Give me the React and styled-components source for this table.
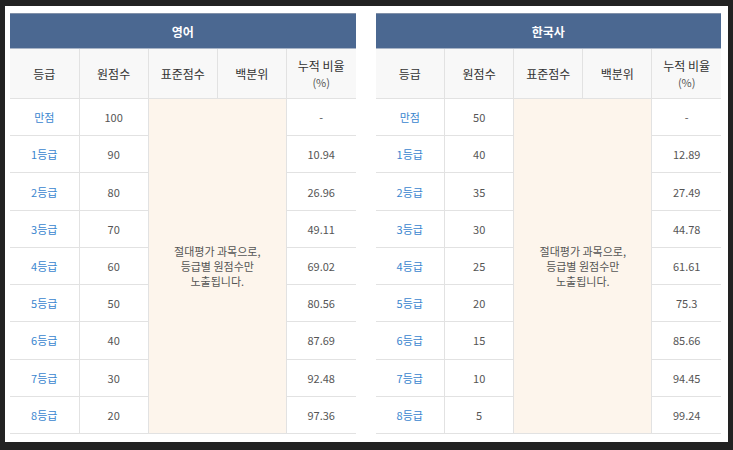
import styled, { createGlobalStyle } from 'styled-components';

const GlobalStyle = createGlobalStyle`
  html, body {
    margin: 0;
    padding: 0;
    background: #222222;
  }
  body {
    font-family: 'Noto Sans CJK KR', 'Noto Sans', sans-serif;
  }
`;

const english = {
  title: '영어',
  rows: [
    ['만점', '100', '-'],
    ['1등급', '90', '10.94'],
    ['2등급', '80', '26.96'],
    ['3등급', '70', '49.11'],
    ['4등급', '60', '69.02'],
    ['5등급', '50', '80.56'],
    ['6등급', '40', '87.69'],
    ['7등급', '30', '92.48'],
    ['8등급', '20', '97.36'],
  ],
};

const history = {
  title: '한국사',
  rows: [
    ['만점', '50', '-'],
    ['1등급', '40', '12.89'],
    ['2등급', '35', '27.49'],
    ['3등급', '30', '44.78'],
    ['4등급', '25', '61.61'],
    ['5등급', '20', '75.3'],
    ['6등급', '15', '85.66'],
    ['7등급', '10', '94.45'],
    ['8등급', '5', '99.24'],
  ],
};

const ScoreTable = ({ data }) => (
  <Table>
    <colgroup>
      <Col />
      <Col />
      <Col />
      <Col />
      <Col />
    </colgroup>
    <thead>
      <tr>
        <Title colSpan={5}>{data.title}</Title>
      </tr>
      <tr>
        <Head>등급</Head>
        <Head>원점수</Head>
        <Head>표준점수</Head>
        <Head>백분위</Head>
        <Head last>
          누적 비율
          <small>(%)</small>
        </Head>
      </tr>
    </thead>
    <tbody>
      {data.rows.map(([grade, raw, ratio], i) => (
        <tr key={grade}>
          <Grade>{grade}</Grade>
          <Cell>{raw}</Cell>
          {i === 0 && (
            <Merged colSpan={2} rowSpan={data.rows.length}>
              절대평가 과목으로,
              <br />
              등급별 원점수만
              <br />
              노출됩니다.
            </Merged>
          )}
          <Cell last>{ratio}</Cell>
        </tr>
      ))}
    </tbody>
  </Table>
);

const App = () => (
  <>
    <GlobalStyle />
    <Frame>
      <Sheet>
        <ScoreTable data={english} />
        <ScoreTable data={history} />
      </Sheet>
    </Frame>
  </>
);

export default App;

const Frame = styled.div`
  padding: 6px 5px 8px 5px;
  height: 450px;
  box-sizing: border-box;
`;
const Sheet = styled.div`
  background: #ffffff;
  height: 100%;
  box-sizing: border-box;
  padding: 7px 7px 0 5px;
  display: flex;
  gap: 20px;
`;
const Table = styled.table`
  flex: 1;
  width: 0;
  border-collapse: collapse;
  table-layout: fixed;
  height: 421px;
  border-bottom: 1px solid #e2e2e2;
  font-size: 11px;
  color: #555;
`;
const Col = styled.col`
  width: 20%;
`;
const Title = styled.th`
  height: 34px;
  padding: 0;
  background: #4b6891;
  border-top: 1px solid #8190a8;
  border-bottom: 1px solid #a8b4c6;
  color: #ffffff;
  font-size: 12px;
  font-weight: bold;
  text-align: center;
`;
const Head = styled.th`
  height: 49px;
  padding: 0;
  background: #f8f8f8;
  border-right: ${({ last }) => (last ? 'none' : '1px solid #e2e2e2')};
  border-bottom: 1px solid #e2e2e2;
  color: #333;
  font-size: 12px;
  font-weight: normal;
  text-align: center;
  line-height: 17px;
  small {
    display: block;
    font-size: 11px;
    color: #555;
  }
`;
const Cell = styled.td`
  padding: 0;
  text-align: center;
  border-right: ${({ last }) => (last ? 'none' : '1px solid #e2e2e2')};
  border-bottom: 1px solid #e2e2e2;
`;
const Grade = styled(Cell)`
  color: #3a86cf;
`;
const Merged = styled.td`
  padding: 0;
  background: #fdf5ec;
  border-right: 1px solid #e2e2e2;
  text-align: center;
  line-height: 15px;
  color: #555;
`;
